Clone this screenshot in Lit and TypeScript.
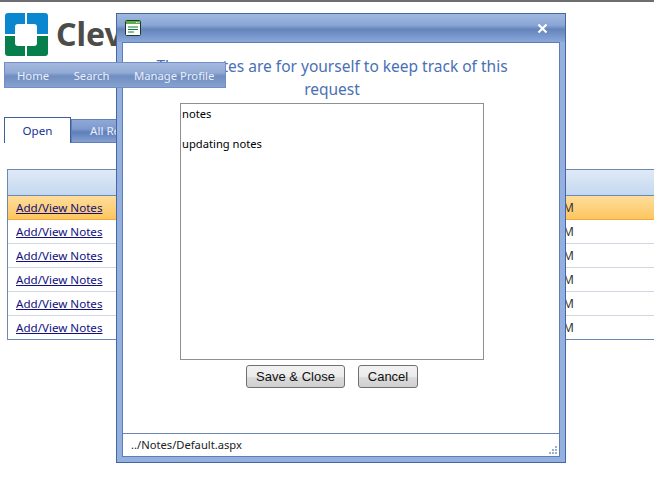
import { LitElement, html, css } from "lit";
import { customElement } from "lit/decorators.js";

const ROWS = [0, 1, 2, 3, 4, 5];

@customElement("app-root")
export class AppRoot extends LitElement {
  static styles = css`
    :host { display: block; position: relative; width: 654px; height: 481px; overflow: hidden; background: #fff;
      font-family: "Noto Sans", "DejaVu Sans", sans-serif; font-size: 11.6px; color: #000; }
    .page { display: flex; flex-direction: column; border-top: 2px solid #6e6e6e; height: 479px; box-sizing: border-box; }
    .brand { display: flex; align-items: center; gap: 8px; padding: 10px 0 0 5px; height: 44px; }
    .logo { display: block; width: 43px; height: 43px; flex: none; }
    .wordmark { font-family: "Noto Sans", sans-serif; font-weight: 700; font-size: 32px; color: #4c4c49; line-height: 44px; white-space: nowrap; }
    .menu { position: relative; z-index: 3; margin: 6px 0 0 4px; width: 222px; height: 26px; box-sizing: border-box;
      border: 1px solid #6f8fc6; display: flex; align-items: center; color: #e8eefa; padding-left: 12px; white-space: nowrap; font-size: 11.3px;
      background: linear-gradient(#a3b9de 0, #93aad4 40%, #6f8dc0 55%, #87a2d0 100%); }
    .menu span { margin-right: 24.500px; }
    .tabs { display: flex; margin: 29px 0 0 4px; height: 26px; }
    .tab { box-sizing: border-box; height: 26px; }
    .tab.on { width: 67px; border: 1px solid #3f5f9a; border-bottom: none; background: #fff; color: #15329a; text-align: center; line-height: 25px; }
    .tab.off { margin-top: 2px; width: 90px; height: 24px; border: 1px solid #5f7fb8; color: #e8eefa; padding-left: 18px; line-height: 22px; white-space: nowrap;
      background: linear-gradient(#8fa8d6 0, #7f9ace 40%, #5f7fb8 55%, #86a0d2 100%); }
    .grid { margin: 26px 0 0 7px; border: 1px solid #6a8ab4; border-right: none; }
    .head { height: 25px; border-bottom: 1px solid #6a8ab4; background: linear-gradient(#e0eaf6, #c3d8f0); }
    .row { display: flex; justify-content: space-between; align-items: center; height: 23px; border-bottom: 1px solid #d0d7e0; padding: 0 80px 0 8px; }
    .row:last-child { border-bottom: none; }
    .row.sel { background: linear-gradient(#fedd9c, #fdc65f); border-bottom-color: #f5a93c; }
    .row a { color: #10107f; text-decoration: underline; }
    .time { color: #333; font-size: 12px; }
    .window { position: absolute; z-index: 2; left: 116px; top: 13px; width: 450px; height: 450px; box-sizing: border-box;
      border: 1px solid #47659f; background: #93b0e0; display: flex; flex-direction: column; }
    .title { flex: none; height: 28px; display: flex; align-items: center; justify-content: space-between; padding: 0 17px 0 8px;
      background: linear-gradient(#a0b9e0 0, #8aa5d5 40%, #6484bb 55%, #8aa8da 100%); }
    .ico { display: block; width: 16px; height: 16px; }
    .x { display: block; width: 11px; height: 11px; }
    .body { flex: 1; margin: 0 5px 5px; border: 1px solid #5f7db5; background: #fff; display: flex; flex-direction: column; min-height: 0; }
    .content { flex: 1; display: flex; flex-direction: column; align-items: center; min-height: 0; padding-right: 18px; }
    h1 { margin: 12px 0 0; width: 400px; font-weight: 400; font-size: 15.5px; line-height: 23px; color: #4a70b4; text-align: center; }
    .notes { margin: 2px 0 0; width: 304px; height: 257px; box-sizing: border-box; border: 1px solid #8f8f8f; padding: 2px 1px; line-height: 15px; color: #000; white-space: pre-line; font-size: 11.2px; }
    .actions { display: flex; gap: 13px; margin-top: 5px; }
    button { font-family: "Liberation Sans", Arial, sans-serif; font-size: 13px; height: 23px; padding: 0; border: 1px solid #707070; border-radius: 3px; color: #111;
      background: linear-gradient(#f2f2f2 0, #ebebeb 50%, #dddddd 50%, #cfcfcf 100%); }
    .b1 { width: 99px; } .b2 { width: 60px; }
    .status { flex: none; position: relative; height: 22px; border-top: 1px solid #6b86b5; padding-left: 8px; line-height: 22px; color: #222; font-size: 11.2px; }
    .grip { position: absolute; right: 2px; bottom: 2px; width: 9px; height: 9px; display: block; }
  `;

  render() {
    return html`
      <div class="page">
        <div class="brand">
          <svg class="logo" viewBox="0 0 43 43">
            <path fill="#0b87cf" d="M0 3a3 3 0 0 1 3-3h17v11h-7a3 3 0 0 0-3 3v7H0z"/>
            <path fill="#0b87cf" d="M22 0h18a3 3 0 0 1 3 3v18H32v-7a3 3 0 0 0-3-3h-7z"/>
            <path fill="#067f4d" d="M0 23h10v7a3 3 0 0 0 3 3h7v10H3a3 3 0 0 1-3-3z"/>
            <path fill="#067f4d" d="M32 23h11v17a3 3 0 0 1-3 3H22V33h7a3 3 0 0 0 3-3z"/>
          </svg>
          <span class="wordmark">Cleveland Clinic</span>
        </div>
        <div class="menu"><span>Home</span><span>Search</span><span>Manage Profile</span></div>
        <div class="tabs"><div class="tab on">Open</div><div class="tab off">All Requests</div></div>
        <div class="grid">
          <div class="head"></div>
          ${ROWS.map((i) => html`<div class="row ${i === 0 ? "sel" : ""}"><a>Add/View Notes</a><span class="time">10:15 AM</span></div>`)}
        </div>
      </div>
      <div class="window">
        <div class="title">
          <svg class="ico" viewBox="0 0 16 16">
            <rect x="0.5" y="0.5" width="15" height="15" rx="1" fill="#fff" stroke="#1c3a24"/>
            <rect x="1" y="1" width="14" height="3" fill="#5cb04a"/>
            <path d="M11 2.500h1.500M13.500 2.500h1" stroke="#d8f0d0"/>
            <path d="M3 7h10M3 9.500h10M3 12h6" stroke="#0d7a3a" stroke-width="1"/>
          </svg>
          <svg class="x" viewBox="0 0 11 11"><path d="M1.500 1.500l8 8M9.500 1.500l-8 8" stroke="#fff" stroke-width="2.200"/></svg>
        </div>
        <div class="body">
          <div class="content">
            <h1>These notes are for yourself to keep track of this request</h1>
            <div class="notes">notes

updating notes</div>
            <div class="actions"><button class="b1">Save &amp; Close</button><button class="b2">Cancel</button></div>
          </div>
          <div class="status">../Notes/Default.aspx
            <svg class="grip" viewBox="0 0 9 9"><path fill="#9fb0cc" d="M7 1h2v2H7zM4 4h2v2H4zM7 4h2v2H7zM1 7h2v2H1zM4 7h2v2H4zM7 7h2v2H7z"/></svg>
          </div>
        </div>
      </div>
    `;
  }
}
